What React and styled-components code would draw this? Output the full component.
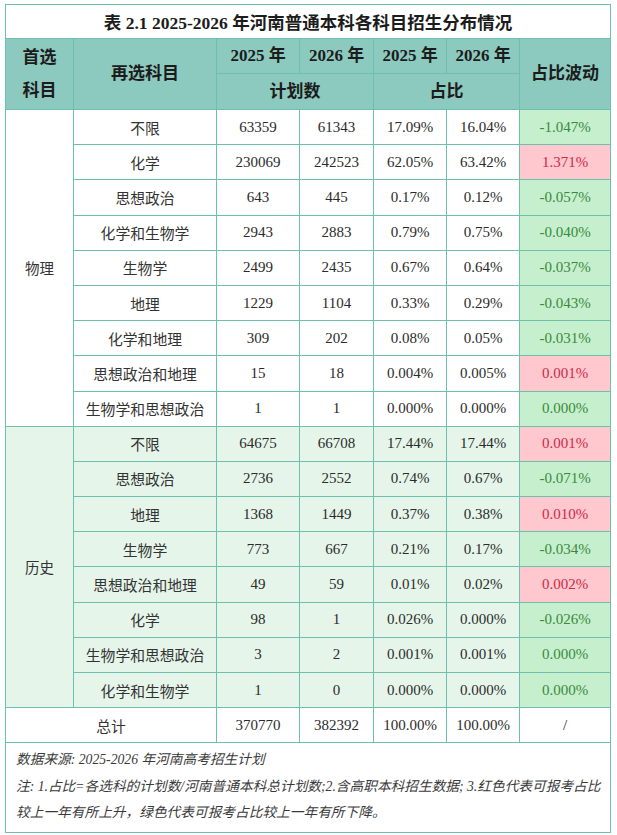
import React from 'react';
import styled, { createGlobalStyle, css } from 'styled-components';

const GlobalStyle = createGlobalStyle`
  body {
    margin: 0;
    background: #ffffff;
  }
`;

const LINE = '#6dbfae';
const HEAD_BG = '#8cc9bf';
const TINT_BG = '#e6f5ea';
const UP_BG = '#ffc7ce';
const DOWN_BG = '#c6efce';

const widths = [68, 143, 83, 74, 73, 73, 91];

const physics = [
  ['不限', '63359', '61343', '17.09%', '16.04%', '-1.047%', 'down'],
  ['化学', '230069', '242523', '62.05%', '63.42%', '1.371%', 'up'],
  ['思想政治', '643', '445', '0.17%', '0.12%', '-0.057%', 'down'],
  ['化学和生物学', '2943', '2883', '0.79%', '0.75%', '-0.040%', 'down'],
  ['生物学', '2499', '2435', '0.67%', '0.64%', '-0.037%', 'down'],
  ['地理', '1229', '1104', '0.33%', '0.29%', '-0.043%', 'down'],
  ['化学和地理', '309', '202', '0.08%', '0.05%', '-0.031%', 'down'],
  ['思想政治和地理', '15', '18', '0.004%', '0.005%', '0.001%', 'up'],
  ['生物学和思想政治', '1', '1', '0.000%', '0.000%', '0.000%', 'down'],
];

const history = [
  ['不限', '64675', '66708', '17.44%', '17.44%', '0.001%', 'up'],
  ['思想政治', '2736', '2552', '0.74%', '0.67%', '-0.071%', 'down'],
  ['地理', '1368', '1449', '0.37%', '0.38%', '0.010%', 'up'],
  ['生物学', '773', '667', '0.21%', '0.17%', '-0.034%', 'down'],
  ['思想政治和地理', '49', '59', '0.01%', '0.02%', '0.002%', 'up'],
  ['化学', '98', '1', '0.026%', '0.000%', '-0.026%', 'down'],
  ['生物学和思想政治', '3', '2', '0.001%', '0.001%', '0.000%', 'down'],
  ['化学和生物学', '1', '0', '0.000%', '0.000%', '0.000%', 'down'],
];

const groups = [
  { name: '物理', rows: physics, tint: false },
  { name: '历史', rows: history, tint: true },
];

const Page = styled.div`
  padding: 4px 0 10px 5px;
`;

const Table = styled.table`
  border-collapse: collapse;
  table-layout: fixed;
  width: 605px;
  border: 1px solid ${LINE};
  font-family: 'Liberation Serif', 'Noto Sans CJK SC', serif;
  color: #2b2b2b;
`;

const Col = styled.col`
  width: ${(p) => p.$w}px;
`;

const TitleCell = styled.th`
  height: 33px;
  padding: 0;
  border: 1px solid ${LINE};
  background: #ffffff;
  font-size: 17.5px;
  font-weight: 700;
  color: #1c1c1c;
  text-align: center;
  vertical-align: middle;
`;

const HeadCell = styled.th`
  height: ${(p) => p.$h || 34}px;
  padding: 0;
  border: 1px solid ${LINE};
  background: ${HEAD_BG};
  font-size: 17px;
  font-weight: 700;
  color: #1c1c1c;
  text-align: center;
  vertical-align: middle;
  line-height: ${(p) => p.$lh || 22}px;
`;

const Row = styled.tr`
  height: 35.2px;
  background: ${(p) => (p.$tint ? TINT_BG : '#ffffff')};
`;

const Cell = styled.td`
  padding: 0;
  border: 1px solid ${LINE};
  text-align: center;
  vertical-align: middle;
  font-size: 15px;
  white-space: nowrap;
  ${(p) =>
    p.$cjk &&
    css`
      font-family: 'Noto Sans CJK SC', sans-serif;
      font-size: 14.8px;
      color: #333333;
    `}
`;

const GroupCell = styled(Cell)`
  font-size: 14.5px;
`;

const DeltaCell = styled(Cell)`
  background: ${(p) => (p.$trend === 'up' ? UP_BG : DOWN_BG)};
  color: ${(p) => (p.$trend === 'up' ? '#cc2a48' : '#3a8a3c')};
`;

const NoteCell = styled.td`
  padding: 4px 10px 5px 10px;
  border: 1px solid ${LINE};
  background: #ffffff;
  font-family: 'Liberation Serif', 'Noto Sans CJK SC', serif;
  font-style: italic;
  font-size: 13.7px;
  line-height: 26.5px;
  color: #3a3a3a;
  text-align: left;
`;

const NoteLine = styled.div`
  white-space: nowrap;
`;

export default function App() {
  return (
    <Page>
      <GlobalStyle />
      <Table>
        <colgroup>
          {widths.map((w, i) => (
            <Col key={i} $w={w} />
          ))}
        </colgroup>
        <thead>
          <tr>
            <TitleCell colSpan={7}>表 2.1 2025-2026 年河南普通本科各科目招生分布情况</TitleCell>
          </tr>
          <tr>
            <HeadCell rowSpan={2} $lh={33}>
              首选
              <br />
              科目
            </HeadCell>
            <HeadCell rowSpan={2}>再选科目</HeadCell>
            <HeadCell $h={34}>2025 年</HeadCell>
            <HeadCell>2026 年</HeadCell>
            <HeadCell>2025 年</HeadCell>
            <HeadCell>2026 年</HeadCell>
            <HeadCell rowSpan={2}>占比波动</HeadCell>
          </tr>
          <tr>
            <HeadCell colSpan={2} $h={35}>
              计划数
            </HeadCell>
            <HeadCell colSpan={2}>占比</HeadCell>
          </tr>
        </thead>
        <tbody>
          {groups.map((g) =>
            g.rows.map((r, i) => (
              <Row key={g.name + i} $tint={g.tint}>
                {i === 0 && (
                  <GroupCell $cjk rowSpan={g.rows.length}>
                    {g.name}
                  </GroupCell>
                )}
                <Cell $cjk>{r[0]}</Cell>
                <Cell>{r[1]}</Cell>
                <Cell>{r[2]}</Cell>
                <Cell>{r[3]}</Cell>
                <Cell>{r[4]}</Cell>
                <DeltaCell $trend={r[6]}>{r[5]}</DeltaCell>
              </Row>
            ))
          )}
          <Row>
            <Cell $cjk colSpan={2}>
              总计
            </Cell>
            <Cell>370770</Cell>
            <Cell>382392</Cell>
            <Cell>100.00%</Cell>
            <Cell>100.00%</Cell>
            <Cell>/</Cell>
          </Row>
          <tr>
            <NoteCell colSpan={7}>
              <NoteLine>数据来源: 2025-2026 年河南高考招生计划</NoteLine>
              <NoteLine>注: 1.占比=各选科的计划数/河南普通本科总计划数;2.含高职本科招生数据; 3.红色代表可报考占比</NoteLine>
              <NoteLine>较上一年有所上升，绿色代表可报考占比较上一年有所下降。</NoteLine>
            </NoteCell>
          </tr>
        </tbody>
      </Table>
    </Page>
  );
}
